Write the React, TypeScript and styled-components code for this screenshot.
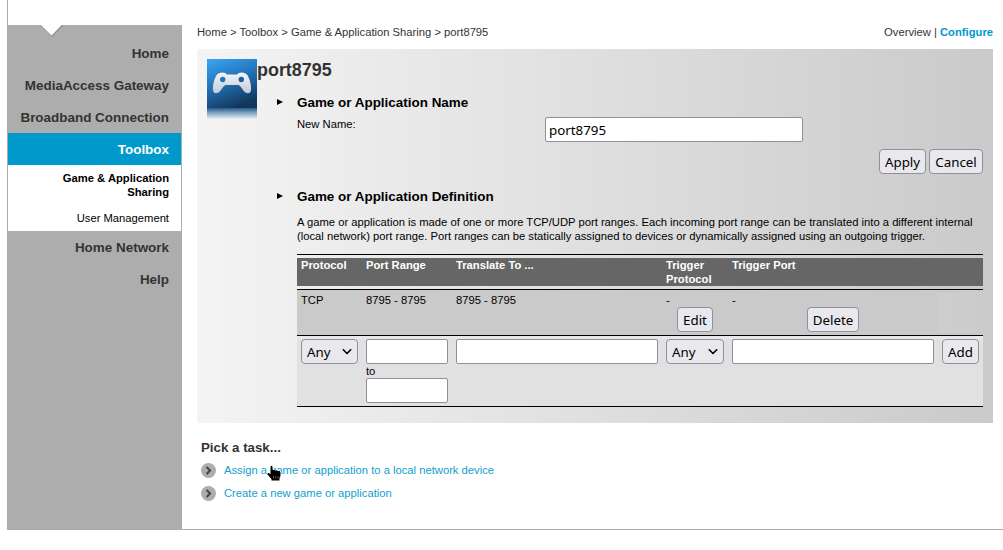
import React from "react";
import styled, { createGlobalStyle } from "styled-components";

const Global = createGlobalStyle`
  * { box-sizing: border-box; }
  body { margin: 0; background: #fff; overflow: hidden; font: 11.23px/14px "Liberation Sans", Arial, sans-serif; color: #000; }
  h1, h2, p { margin: 0; }
`;
const Page = styled.div`
  position: relative; display: flex; height: 530px; margin-left: 7px;
  border-left: 1px solid #acacac; border-bottom: 1px solid #acacac;
`;
const Sidebar = styled.nav`
  width: 174px; flex: none; margin-top: 25px; background: #adadad;
  border-right: 1px solid #adadad; display: flex; flex-direction: column; position: relative;
  padding-top: 12px;
`;
const Notch = styled.svg`
  position: absolute; left: 32px; top: 0; display: block;
`;
const NavItem = styled.a<{ $active?: boolean }>`
  height: 32px; line-height: 32px; padding: 1px 12px 0 0; text-align: right; white-space: nowrap;
  font-size: 13.44px; font-weight: bold; flex: none;
  color: ${p => (p.$active ? "#fff" : "#333")};
  background: ${p => (p.$active ? "#0099cc" : "transparent")};
`;
const SubMenu = styled.div`
  background: #fff; height: 66px; padding: 6px 12px 0 40px; text-align: right; flex: none;
  display: flex; flex-direction: column; gap: 12px;
`;
const SubItem = styled.a<{ $current?: boolean }>`
  color: #000; font-weight: ${p => (p.$current ? "bold" : "normal")};
`;
const Main = styled.main`
  flex: 1; padding: 25px 10px 0 15px; display: flex; flex-direction: column;
`;
const TopBar = styled.div`
  display: flex; justify-content: space-between; height: 24px; color: #333; white-space: pre;
`;
const Configure = styled.b` color: #0099cc; `;
const Panel = styled.section`
  height: 374px; padding: 10px; display: flex; flex: none;
  background: linear-gradient(to right, #f4f4f4, #cacaca);
`;
const Content = styled.div` flex: 1; min-width: 0; `;
const Title = styled.h1`
  font-size: 17.92px; line-height: 22px; color: #333; height: 34px;
`;
const Section = styled.div` padding-left: 40px; `;
const Heading = styled.h2`
  font-size: 13.44px; line-height: 18px; height: 18px; padding-top: 1px; position: relative;
  &::before {
    content: ""; position: absolute; left: -20px; top: 6px;
    border-left: 6px solid #000; border-top: 3px solid transparent; border-bottom: 3px solid transparent;
  }
`;
const NameRow = styled.div`
  display: grid; grid-template-columns: 248px 258px; padding-top: 6px; height: 38px;
`;
const FieldLabel = styled.label``;
const TextInput = styled.input`
  width: 100%; height: 25px; display: block; border: 1px solid #8f8f9d; border-radius: 2px;
  background: #fff; padding: 1px 3px; font: 13.333px "Noto Sans", sans-serif; color: #000;
`;
const Button = styled.button<{ $w: number; $ml?: number }>`
  width: ${p => p.$w}px; margin: 0 0 0 ${p => p.$ml || 0}px; height: 25px; padding: 0; display: block;
  border: 1px solid #8f8f9d; border-radius: 4px; background: #e9e9ed; color: #000;
  font: 13.333px/22px "Noto Sans", sans-serif; text-align: center; white-space: nowrap;
`;
const Actions = styled.div`
  display: flex; justify-content: flex-end; gap: 3px; height: 38px;
`;
const Description = styled.p` padding-top: 10px; height: 49px; white-space: nowrap; `;
const Table = styled.div`
  width: 686px; border-top: 1px solid #000; padding-top: 3px;
`;
const Row = styled.div`
  display: grid; grid-template-columns: 65px 90px 210px 66px 210px 1fr; align-items: start;
`;
const HeadRow = styled(Row)`
  height: 28px; background: #666; color: #fff; font-weight: bold; margin-bottom: 3px;
`;
const DataRow = styled(Row)`
  height: 47px; border-top: 1px solid #000; border-bottom: 1px solid #000; background: #cacaca; padding-top: 3px;
`;
const FormRow = styled(Row)`
  height: 71px; border-bottom: 1px solid #000; padding-top: 3px;
  background: linear-gradient(#e8e8e8 3px, #e1e1e1 3px);
`;
const Cell = styled.div` padding: 0 4px; min-width: 0; `;
const EmptyCell = styled.div`
  height: 39px; background: linear-gradient(to right, #cecece, #cbcbcb);
`;
const Select = styled.div<{ $w: number }>`
  width: ${p => p.$w}px; height: 25px; border: 1px solid #8f8f9d; border-radius: 4px; background: #e9e9ed;
  display: flex; align-items: center; justify-content: space-between; padding: 0 5px 0 5px;
  font: 13.333px/23px "Noto Sans", sans-serif;
`;
const SelectText = styled.span` padding-top: 1px; `;
const Tasks = styled.div` padding: 17px 0 0 4px; `;
const TasksTitle = styled.h2` font-size: 13.3px; line-height: 16px; color: #333; height: 19px; `;
const Task = styled.a`
  display: flex; align-items: center; height: 23px; gap: 8px; color: #0e9fd0;
`;
const TaskText = styled.span` padding-bottom: 2px; `;
const Cursor = styled.svg` position: absolute; left: 257px; top: 463px; `;

const Chevron = () => (
  <svg width="10" height="6" viewBox="0 0 10 6" fill="none" stroke="#000" strokeWidth="1.6">
    <path d="M1.300 .8L5 4.500L8.700 .8" strokeLinejoin="round" strokeLinecap="round" />
  </svg>
);
const Bullet = () => (
  <svg width="15" height="15" viewBox="0 0 15 15">
    <circle cx="7.5" cy="7.5" r="7.5" fill="#adadad" />
    <path d="M5.6 4L9.1 7.5L5.6 11" fill="none" stroke="#444" strokeWidth="2" />
  </svg>
);
const GameIcon = () => (
  <svg width="50" height="60" viewBox="0 0 50 60">
    <defs>
      <linearGradient id="sky" x1="0.15" y1="0" x2="0.55" y2="1">
        <stop offset="0" stopColor="#38a1f3" />
        <stop offset="0.5" stopColor="#2270b2" />
        <stop offset="1" stopColor="#12375d" />
      </linearGradient>
      <linearGradient id="fade" x1="0" y1="0" x2="0" y2="1">
        <stop offset="0" stopColor="#285b88" />
        <stop offset="0.5" stopColor="#8bacc9" />
        <stop offset="1" stopColor="#e8eef3" />
      </linearGradient>
      <linearGradient id="pad" x1="0" y1="0" x2="0" y2="1">
        <stop offset="0" stopColor="#f2f5fa" />
        <stop offset="1" stopColor="#c3cbd9" />
      </linearGradient>
    </defs>
    <rect width="50" height="49" fill="url(#sky)" />
    <rect y="49" width="50" height="11" fill="url(#fade)" />
    <path d="M10 15.500C13 12.800 18 12.800 20 15.500H30C32 12.800 37 12.800 40 15.500C42.500 19 44.500 26 44 31C43.500 35.500 39 35.200 36 31C34 28 33 26 30.500 26H19.500C17 26 16 28 14 31C11 35.200 6.500 35.500 6 31C5.500 26 7.500 19 10 15.500Z" fill="url(#pad)" />
    <circle cx="15.700" cy="20.500" r="2.700" fill="#2373b5" />
    <circle cx="34.300" cy="20.500" r="2.700" fill="#1e5f99" />
  </svg>
);

export default function App() {
  return (
    <>
      <Global />
      <Page>
        <Sidebar>
          <Notch width="24" height="13" viewBox="0 0 24 13">
            <path d="M0 0H24L12 12.500Z" fill="#999" />
            <path d="M1 0H21.500L11.500 10.500Z" fill="#fff" />
          </Notch>
          <NavItem>Home</NavItem>
          <NavItem>MediaAccess Gateway</NavItem>
          <NavItem>Broadband Connection</NavItem>
          <NavItem $active>Toolbox</NavItem>
          <SubMenu>
            <SubItem $current>Game &amp; Application Sharing</SubItem>
            <SubItem>User Management</SubItem>
          </SubMenu>
          <NavItem>Home Network</NavItem>
          <NavItem>Help</NavItem>
        </Sidebar>
        <Main>
          <TopBar>
            <span>Home &gt; Toolbox &gt; Game &amp; Application Sharing &gt; port8795</span>
            <span>Overview | <Configure>Configure</Configure></span>
          </TopBar>
          <Panel>
            <GameIcon />
            <Content>
              <Title>port8795</Title>
              <Section>
                <Heading>Game or Application Name</Heading>
                <NameRow>
                  <FieldLabel>New Name:</FieldLabel>
                  <TextInput defaultValue="port8795" />
                </NameRow>
                <Actions>
                  <Button $w={47}>Apply</Button>
                  <Button $w={54}>Cancel</Button>
                </Actions>
                <Heading>Game or Application Definition</Heading>
                <Description>
                  A game or application is made of one or more TCP/UDP port ranges. Each incoming port range can be translated into a different internal
                  <br />
                  (local network) port range. Port ranges can be statically assigned to devices or dynamically assigned using an outgoing trigger.
                </Description>
                <Table>
                  <HeadRow>
                    <Cell>Protocol</Cell>
                    <Cell>Port Range</Cell>
                    <Cell>Translate To ...</Cell>
                    <Cell>Trigger Protocol</Cell>
                    <Cell>Trigger Port</Cell>
                  </HeadRow>
                  <DataRow>
                    <Cell>TCP</Cell>
                    <Cell>8795 - 8795</Cell>
                    <Cell>8795 - 8795</Cell>
                    <Cell>-<Button $w={36} $ml={11}>Edit</Button></Cell>
                    <Cell>-<Button $w={52} $ml={75}>Delete</Button></Cell>
                    <EmptyCell />
                  </DataRow>
                  <FormRow>
                    <Cell><Select $w={57}><SelectText>Any</SelectText><Chevron /></Select></Cell>
                    <Cell><TextInput />to<TextInput /></Cell>
                    <Cell><TextInput /></Cell>
                    <Cell><Select $w={58}><SelectText>Any</SelectText><Chevron /></Select></Cell>
                    <Cell><TextInput /></Cell>
                    <Cell><Button $w={37}>Add</Button></Cell>
                  </FormRow>
                </Table>
              </Section>
            </Content>
          </Panel>
          <Tasks>
            <TasksTitle>Pick a task...</TasksTitle>
            <Task><Bullet /><TaskText>Assign a game or application to a local network device</TaskText></Task>
            <Task><Bullet /><TaskText>Create a new game or application</TaskText></Task>
          </Tasks>
        </Main>
        <Cursor width="18" height="20" viewBox="0 0 18 20">
          <path d="M5 3.500Q6.500 1.500 8 3.500V6.500Q9.500 5.800 10.500 7Q12 6.300 13 7.500Q14.800 7 16 9V13L15 15V18H6V16L2 11.500Q1.500 9 4 9.500L5 10.500Z" fill="#000" stroke="#fff" strokeWidth="1" />
          <path d="M8.500 13V15.500M10.700 13V15.500M13 13V15.500" stroke="#777" strokeWidth=".7" />
        </Cursor>
      </Page>
    </>
  );
}
